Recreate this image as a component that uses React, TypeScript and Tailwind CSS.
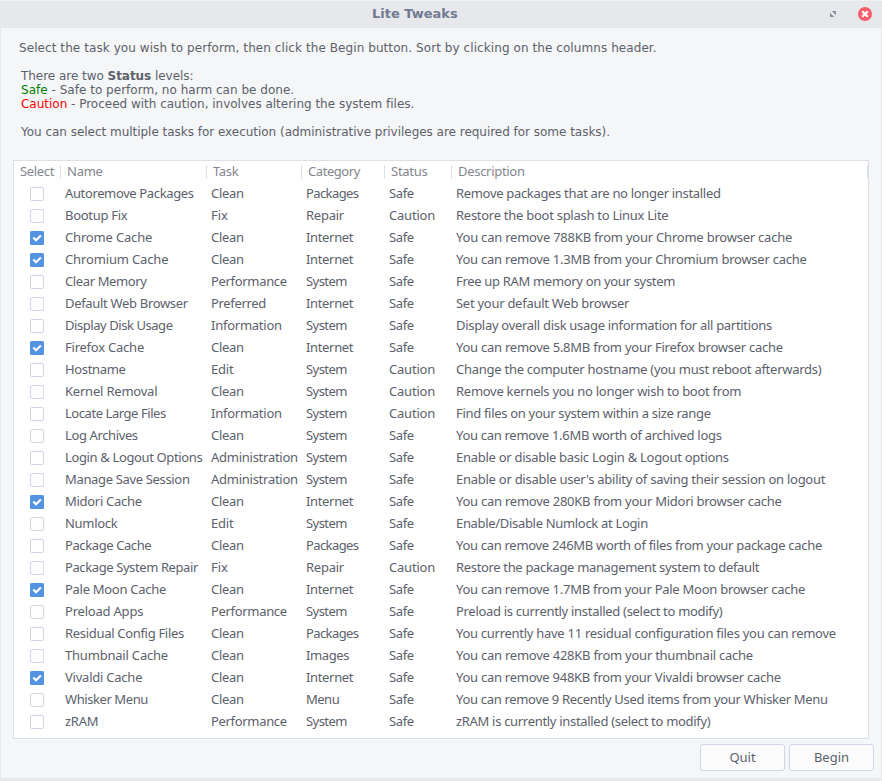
import type { ReactNode } from 'react';

type Row = { on?: boolean; name: [string, number]; task: string; category: string; status: string; description: [string, number] };

const row = (on: 0 | 1, name: string, nt: number, task: string, category: string, status: string, description: string, dt: number): Row => ({
  on: on === 1, name: [name, nt], task, category, status, description: [description, dt],
});

const rows: Row[] = [
  row(0, 'Autoremove Packages', -0.37, 'Clean', 'Packages', 'Safe', 'Remove packages that are no longer installed', -0.32),
  row(0, 'Bootup Fix', -0.3, 'Fix', 'Repair', 'Caution', 'Restore the boot splash to Linux Lite', -0.27),
  row(1, 'Chrome Cache', -0.17, 'Clean', 'Internet', 'Safe', 'You can remove 788KB from your Chrome browser cache', -0.22),
  row(1, 'Chromium Cache', -0.14, 'Clean', 'Internet', 'Safe', 'You can remove 1.3MB from your Chromium browser cache', -0.24),
  row(0, 'Clear Memory', -0.38, 'Performance', 'System', 'Safe', 'Free up RAM memory on your system', -0.32),
  row(0, 'Default Web Browser', -0.32, 'Preferred', 'Internet', 'Safe', 'Set your default Web browser', -0.27),
  row(0, 'Display Disk Usage', -0.44, 'Information', 'System', 'Safe', 'Display overall disk usage information for all partitions', -0.3),
  row(1, 'Firefox Cache', -0.23, 'Clean', 'Internet', 'Safe', 'You can remove 5.8MB from your Firefox browser cache', -0.25),
  row(0, 'Hostname', -0.34, 'Edit', 'System', 'Caution', 'Change the computer hostname (you must reboot afterwards)', -0.26),
  row(0, 'Kernel Removal', -0.21, 'Clean', 'System', 'Caution', 'Remove kernels you no longer wish to boot from', -0.27),
  row(0, 'Locate Large Files', -0.44, 'Information', 'System', 'Caution', 'Find files on your system within a size range', -0.31),
  row(0, 'Log Archives', -0.38, 'Clean', 'System', 'Safe', 'You can remove 1.6MB worth of archived logs', -0.3),
  row(0, 'Login & Logout Options', -0.36, 'Administration', 'System', 'Safe', 'Enable or disable basic Login & Logout options', -0.28),
  row(0, 'Manage Save Session', -0.34, 'Administration', 'System', 'Safe', "Enable or disable user's ability of saving their session on logout", -0.26),
  row(1, 'Midori Cache', -0.29, 'Clean', 'Internet', 'Safe', 'You can remove 280KB from your Midori browser cache', -0.25),
  row(0, 'Numlock', -0.29, 'Edit', 'System', 'Safe', 'Enable/Disable Numlock at Login', -0.32),
  row(0, 'Package Cache', -0.4, 'Clean', 'Packages', 'Safe', 'You can remove 246MB worth of files from your package cache', -0.3),
  row(0, 'Package System Repair', -0.4, 'Fix', 'Repair', 'Caution', 'Restore the package management system to default', -0.34),
  row(1, 'Pale Moon Cache', -0.29, 'Clean', 'Internet', 'Safe', 'You can remove 1.7MB from your Pale Moon browser cache', -0.26),
  row(0, 'Preload Apps', -0.21, 'Performance', 'System', 'Safe', 'Preload is currently installed (select to modify)', -0.3),
  row(0, 'Residual Config Files', -0.31, 'Clean', 'Packages', 'Safe', 'You currently have 11 residual configuration files you can remove', -0.28),
  row(0, 'Thumbnail Cache', -0.2, 'Clean', 'Images', 'Safe', 'You can remove 428KB from your thumbnail cache', -0.25),
  row(1, 'Vivaldi Cache', -0.23, 'Clean', 'Internet', 'Safe', 'You can remove 948KB from your Vivaldi browser cache', -0.26),
  row(0, 'Whisker Menu', -0.42, 'Clean', 'Menu', 'Safe', 'You can remove 9 Recently Used items from your Whisker Menu', -0.31),
  row(0, 'zRAM', -0.25, 'Performance', 'System', 'Safe', 'zRAM is currently installed (select to modify)', -0.31),
];

// Letter spacing, in pixels, of the words that recur in the table.
const tracking: Record<string, number> = {
  Clean: -0.3, Fix: 0, Performance: -0.32, Preferred: -0.33, Information: -0.25, Edit: -0.2, Administration: -0.26,
  Packages: -0.6, Repair: -0.25, Internet: -0.34, System: -0.55, Images: -0.4, Menu: -0.5, Safe: -0.4, Caution: -0.2,
  Select: -0.33, Name: -0.25, Task: -0.35, Category: -0.44, Status: -0.25, Description: -0.3,
};

const grid = 'grid grid-cols-[47px_146px_95px_83px_67px_1fr]';

function Spaced({ by, children }: { by: number; children: ReactNode }) {
  return <span style={{ letterSpacing: by }}>{children}</span>;
}

function Check({ on }: { on?: boolean }) {
  if (!on) return <span className="h-[14px] w-[14px] rounded-[2px] border border-[#cfd6e6] bg-white" />;
  return (
    <svg className="h-[14px] w-[14px]" viewBox="0 0 14 14">
      <rect width="14" height="14" rx="1.5" fill="#5294e2" />
      <path d="M3.3 6.6 L6 9.3 L10.9 4.4" fill="none" stroke="#fff" strokeWidth="2.1" />
    </svg>
  );
}

export default function App() {
  return (
    <div className="flex h-[781px] w-[882px] flex-col overflow-hidden bg-[#f5f6f7] font-['Noto_Sans',sans-serif] text-[13px] text-[#5c616c]">
      <div className="flex h-[781px] flex-col rounded-b-[2px] border-b-[3px] border-[#e7e8eb]">
        <header className="flex h-7 shrink-0 items-center border-t border-[#f0f1f3] bg-[#e7e8eb] pb-px font-['DejaVu_Sans',sans-serif]">
          <h1 className="ml-[372px] w-[456px] text-[13px] font-bold text-[#707a91]">Lite Tweaks</h1>
          <svg className="h-[10px] w-[10px]" viewBox="0 0 10 10" fill="#8c909b"><path d="M3.7 2H8v4.3zM2 3.7v4.3h4.3z" /></svg>
          <svg className="ml-5 h-[14px] w-[14px]" viewBox="0 0 14 14">
            <circle cx="7" cy="7" r="7" fill="#f75d68" />
            <path d="M4.2 4.2l5.6 5.6m0-5.6l-5.6 5.6" stroke="#fff" strokeWidth="2.3" />
          </svg>
        </header>
        <div className="flex grow flex-col border-x border-[#e7e8eb]">
          <section className="h-[132px] pl-5 pt-[13px] font-['DejaVu_Sans',sans-serif] text-[12px] leading-[14px]">
            <p className="-ml-[2px] mb-[14px] tracking-[0.077px]">Select the task you wish to perform, then click the Begin button. Sort by clicking on the columns header.</p>
            <p className="tracking-[-0.04px]">There are two <b>Status</b> levels:</p>
            <p className="tracking-[0.02px]"><span className="text-[#008000]">Safe</span> - Safe to perform, no harm can be done.</p>
            <p className="mb-[14px] tracking-[-0.01px]"><span className="text-[#ff0000]">Caution</span> - Proceed with caution, involves altering the system files.</p>
            <p className="tracking-[-0.025px]">You can select multiple tasks for execution (administrative privileges are required for some tasks).</p>
          </section>
          <main className="ml-3 h-[579px] w-[856px] border border-[#dcdfe3] bg-white">
            <div className={`${grid} h-[22px] items-center text-[#83868e]`}>
              {['Select', 'Name', 'Task', 'Category', 'Status', 'Description'].map((h) => (
                <div key={h} className="flex h-[14px] items-center border-r border-[#dcdfe3] pl-[6px]"><Spaced by={tracking[h]}>{h}</Spaced></div>
              ))}
            </div>
            {rows.map((r) => (
              <div key={r.name[0]} className={`${grid} h-[22px] items-center whitespace-nowrap`}>
                <div className="flex pl-4"><Check on={r.on} /></div>
                <div className="pl-1"><Spaced by={r.name[1]}>{r.name[0]}</Spaced></div>
                {[r.task, r.category, r.status].map((c) => (
                  <div key={c} className="pl-1"><Spaced by={tracking[c]}>{c}</Spaced></div>
                ))}
                <div className="pl-1"><Spaced by={r.description[1]}>{r.description[0]}</Spaced></div>
              </div>
            ))}
          </main>
          <footer className="mt-[5px] flex gap-1 pl-[699px]">
            {['Quit', 'Begin'].map((b) => (
              <button key={b} className="h-[27px] w-[85px] rounded-[3px] border border-[#cfd6e6] bg-[#fbfbfc]">{b}</button>
            ))}
          </footer>
        </div>
      </div>
    </div>
  );
}
